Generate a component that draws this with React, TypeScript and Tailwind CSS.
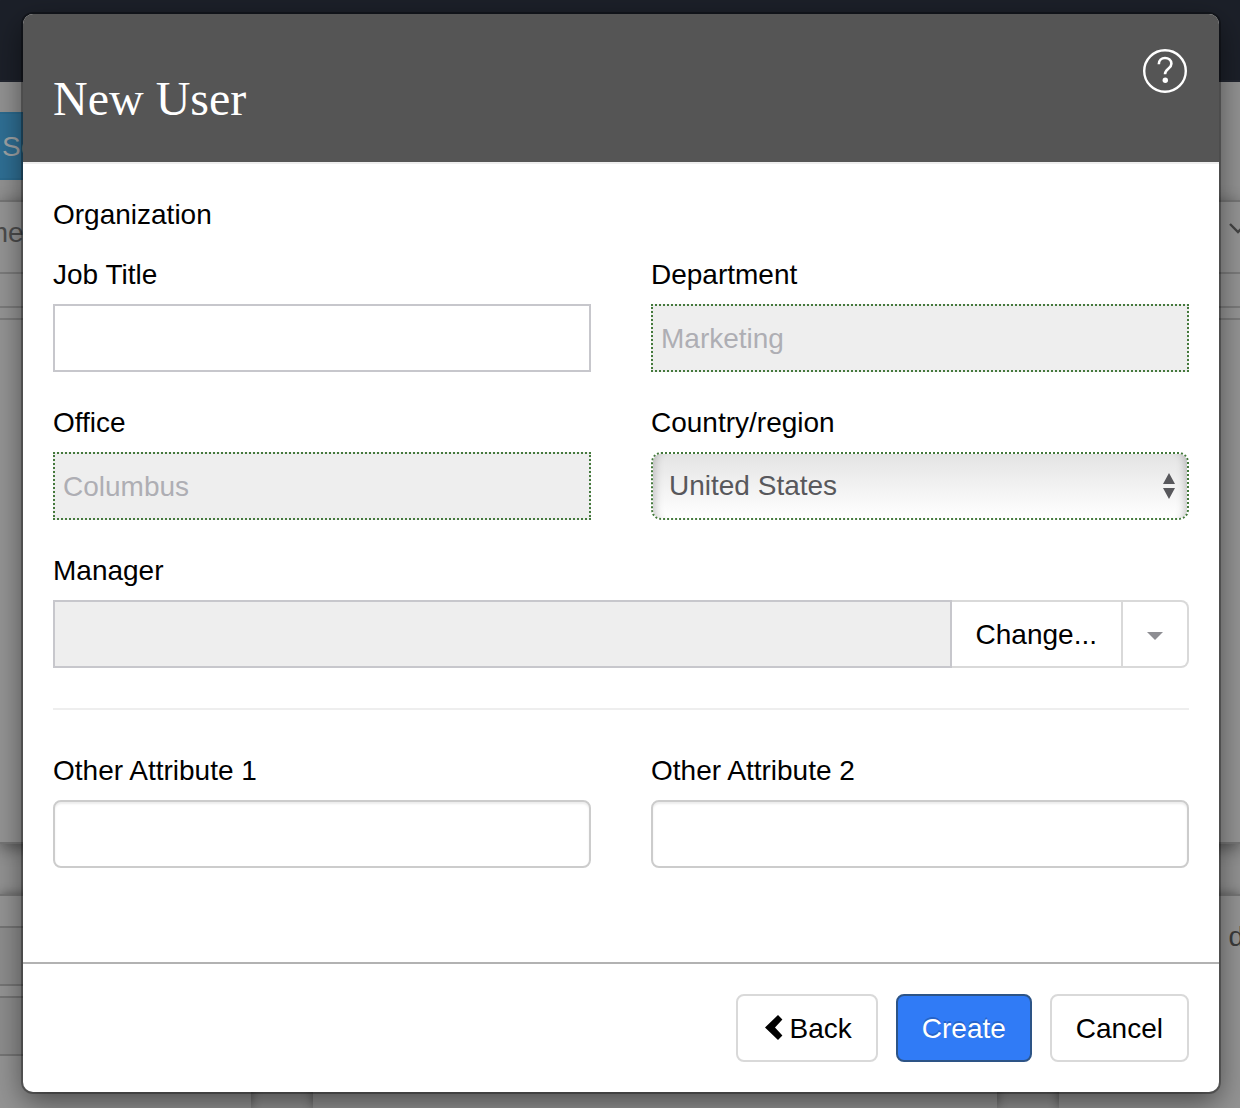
import type { ReactNode } from "react";

const fieldBase =
  "block h-[68px] w-full border-2 px-2 pt-[2px] text-[28px] text-black outline-none placeholder:text-[#aeaeb4] placeholder:opacity-100";

function Field({
  id,
  label,
  children,
}: {
  id: string;
  label: string;
  children: ReactNode;
}) {
  return (
    <div className="mb-[30px]">
      <label htmlFor={id} className="mb-2 block leading-[42px]">
        {label}
      </label>
      {children}
    </div>
  );
}

function Backdrop() {
  return (
    <div
      aria-hidden="true"
      className="absolute inset-0 flex flex-col overflow-hidden bg-[#929292]"
    >
      <div className="h-[82px] shrink-0 border-b-2 border-[#222630] bg-[#1c2029]" />
      <div className="mt-[30px] flex h-[68px] w-60 shrink-0 items-center border-y-2 border-[#2b6a8e] bg-[#2f6f94] pt-[2px] pl-[2px] text-[#a0a4a6]">
        Search
      </div>
      <div className="mt-5 flex h-[644px] shrink-0 flex-col border-y-2 border-[#757575] bg-[#949494] shadow-[0_4px_16px_rgba(0,0,0,0.45)]">
        <div className="flex h-[72px] items-center justify-between border-b-2 border-[#7b7b7b]">
          <span className="-ml-[51px] pb-2 text-[#4c4c4c]">Name</span>
          <svg
            className="-mr-[9px] mb-4 h-5 w-5 shrink-0"
            viewBox="0 0 20 20"
            fill="none"
            stroke="#444"
            strokeWidth="2.4"
          >
            <path d="M1 5l8 8 8-8" />
          </svg>
        </div>
        <div className="h-[34px] border-b-2 border-[#7b7b7b]" />
        <div className="h-3 border-b-2 border-[#7b7b7b]" />
      </div>
      <div className="mt-[50px] flex grow gap-[62px]">
        <div className="w-[251px] border-t-2 border-[#757575] bg-[#949494] shadow-[0_0_10px_rgba(0,0,0,0.4)]">
          <div className="mt-[30px] h-[60px] border-y-2 border-[#757575] bg-[#8d8d8d]" />
          <div className="mt-[10px] h-[60px] border-y-2 border-[#757575] bg-[#8d8d8d]" />
        </div>
        <div className="grow border-t-2 border-[#757575] bg-[#949494] shadow-[0_0_10px_rgba(0,0,0,0.4)]" />
        <div className="flex w-[181px] items-start justify-end border-t-2 border-[#757575] bg-[#949494] pt-[21px] shadow-[0_0_10px_rgba(0,0,0,0.4)]">
          <span className="-mr-1 text-[#3c3c3c]">d</span>
        </div>
      </div>
    </div>
  );
}

export default function App() {
  return (
    <div className="relative min-h-screen pt-[14px] pr-[21px] pb-4 pl-[23px] font-['Liberation_Sans',Arial,sans-serif] text-[28px] leading-[40px] text-black">
      <Backdrop />
      <div
        role="dialog"
        aria-labelledby="dialog-title"
        className="relative rounded-[10px] bg-white shadow-[0_0_0_2px_rgba(0,0,0,0.3),0_10px_30px_rgba(0,0,0,0.5)]"
      >
        <header className="flex items-start justify-between rounded-t-[10px] bg-[#555] px-[30px] pt-[34px] pb-8">
          <h1
            id="dialog-title"
            className="mt-5 font-['Liberation_Serif','Times_New_Roman',serif] text-[48px] leading-[62px] text-white"
          >
            New User
          </h1>
          <button type="button" aria-label="Help">
            <svg
              className="h-12 w-12"
              viewBox="0 0 48 48"
              fill="none"
              stroke="white"
              strokeWidth="2.4"
            >
              <circle cx="24" cy="23" r="20.8" />
              <path
                d="M17.8 16.2c0-3.7 2.7-6.2 6.2-6.2s6.4 2.3 6.4 5.8c0 5-6.4 5-6.4 10.4"
                strokeWidth="2.6"
              />
              <circle cx="24.3" cy="32.3" r="2.7" fill="white" stroke="none" />
            </svg>
          </button>
        </header>

        <form id="new-user" className="border-t-2 border-[#eee] px-[30px] pt-[30px] pb-16">
          <h2 className="mb-[18px] leading-[42px]">Organization</h2>
          <div className="grid grid-cols-2 gap-x-[60px]">
            <Field id="job-title" label="Job Title">
              <input
                id="job-title"
                type="text"
                className={`${fieldBase} border-[#c7c7cc] bg-white`}
              />
            </Field>
            <Field id="department" label="Department">
              <input
                id="department"
                type="text"
                placeholder="Marketing"
                readOnly
                className={`${fieldBase} border-dotted border-[#44793c] bg-[#eee]`}
              />
            </Field>
            <Field id="office" label="Office">
              <input
                id="office"
                type="text"
                placeholder="Columbus"
                readOnly
                className={`${fieldBase} border-dotted border-[#44793c] bg-[#eee]`}
              />
            </Field>
            <Field id="country" label="Country/region">
              <div className="relative">
                <select
                  id="country"
                  defaultValue="US"
                  className="block h-[68px] w-full appearance-none rounded-[10px] border-2 border-dotted border-[#44793c] bg-linear-to-b from-[#e4e4e4] to-white bg-clip-padding px-4 text-[28px] text-[#58585c] shadow-[inset_10px_0_8px_-8px_rgba(0,0,0,0.22),inset_-10px_0_8px_-8px_rgba(0,0,0,0.22)] outline-none"
                >
                  <option value="US">United States</option>
                </select>
                <svg
                  className="pointer-events-none absolute top-5 right-[14px] h-7 w-3"
                  viewBox="0 0 12 28"
                  fill="#58585c"
                >
                  <path d="M6 1l6 11H0zM0 16h12L6 27z" />
                </svg>
              </div>
            </Field>
          </div>

          <Field id="manager" label="Manager">
            <div className="flex h-[68px]">
              <input
                id="manager"
                type="text"
                readOnly
                className="min-w-0 grow border-2 border-[#c7c7cc] bg-[#eee] px-2 text-[28px] outline-none"
              />
              <button type="button" className="border-y-2 border-r-2 border-[#d9d9d9] px-6 pt-[2px]">
                Change...
              </button>
              <button
                type="button"
                aria-label="More manager options"
                className="rounded-r-[8px] border-y-2 border-r-2 border-[#d9d9d9] px-6"
              >
                <svg className="mt-1 h-2 w-4" viewBox="0 0 16 8" fill="#8e8e93">
                  <path d="M0 0h16L8 8z" />
                </svg>
              </button>
            </div>
          </Field>

          <hr className="my-10 border-t-2 border-[#eee]" />

          <div className="grid grid-cols-2 gap-x-[60px]">
            <Field id="attribute-1" label="Other Attribute 1">
              <input
                id="attribute-1"
                type="text"
                className={`${fieldBase} rounded-[8px] border-[#ccc] shadow-[inset_0_2px_2px_rgba(0,0,0,0.075)]`}
              />
            </Field>
            <Field id="attribute-2" label="Other Attribute 2">
              <input
                id="attribute-2"
                type="text"
                className={`${fieldBase} rounded-[8px] border-[#ccc] shadow-[inset_0_2px_2px_rgba(0,0,0,0.075)]`}
              />
            </Field>
          </div>
        </form>

        <footer className="flex justify-end gap-[18px] border-t-2 border-[#b2b2b2] p-[30px]">
          <button
            type="button"
            className="flex h-[68px] items-center rounded-[8px] border-2 border-[#d9d9d9] px-6 pt-[2px]"
          >
            <svg className="h-7 w-7" viewBox="0 0 28 28">
              <path d="M16 0l4.4 4.4-7.4 8.1 7.4 8.1L16 25 3 12.5z" />
            </svg>
            Back
          </button>
          <button
            type="submit"
            form="new-user"
            className="h-[68px] rounded-[8px] border-2 border-[#2d5486] bg-[#307bf6] px-6 pt-[2px] text-white [text-shadow:0_-2px_0_rgba(0,0,0,0.2)]"
          >
            Create
          </button>
          <button
            type="button"
            className="h-[68px] rounded-[8px] border-2 border-[#d9d9d9] px-6 pt-[2px]"
          >
            Cancel
          </button>
        </footer>
      </div>
    </div>
  );
}
